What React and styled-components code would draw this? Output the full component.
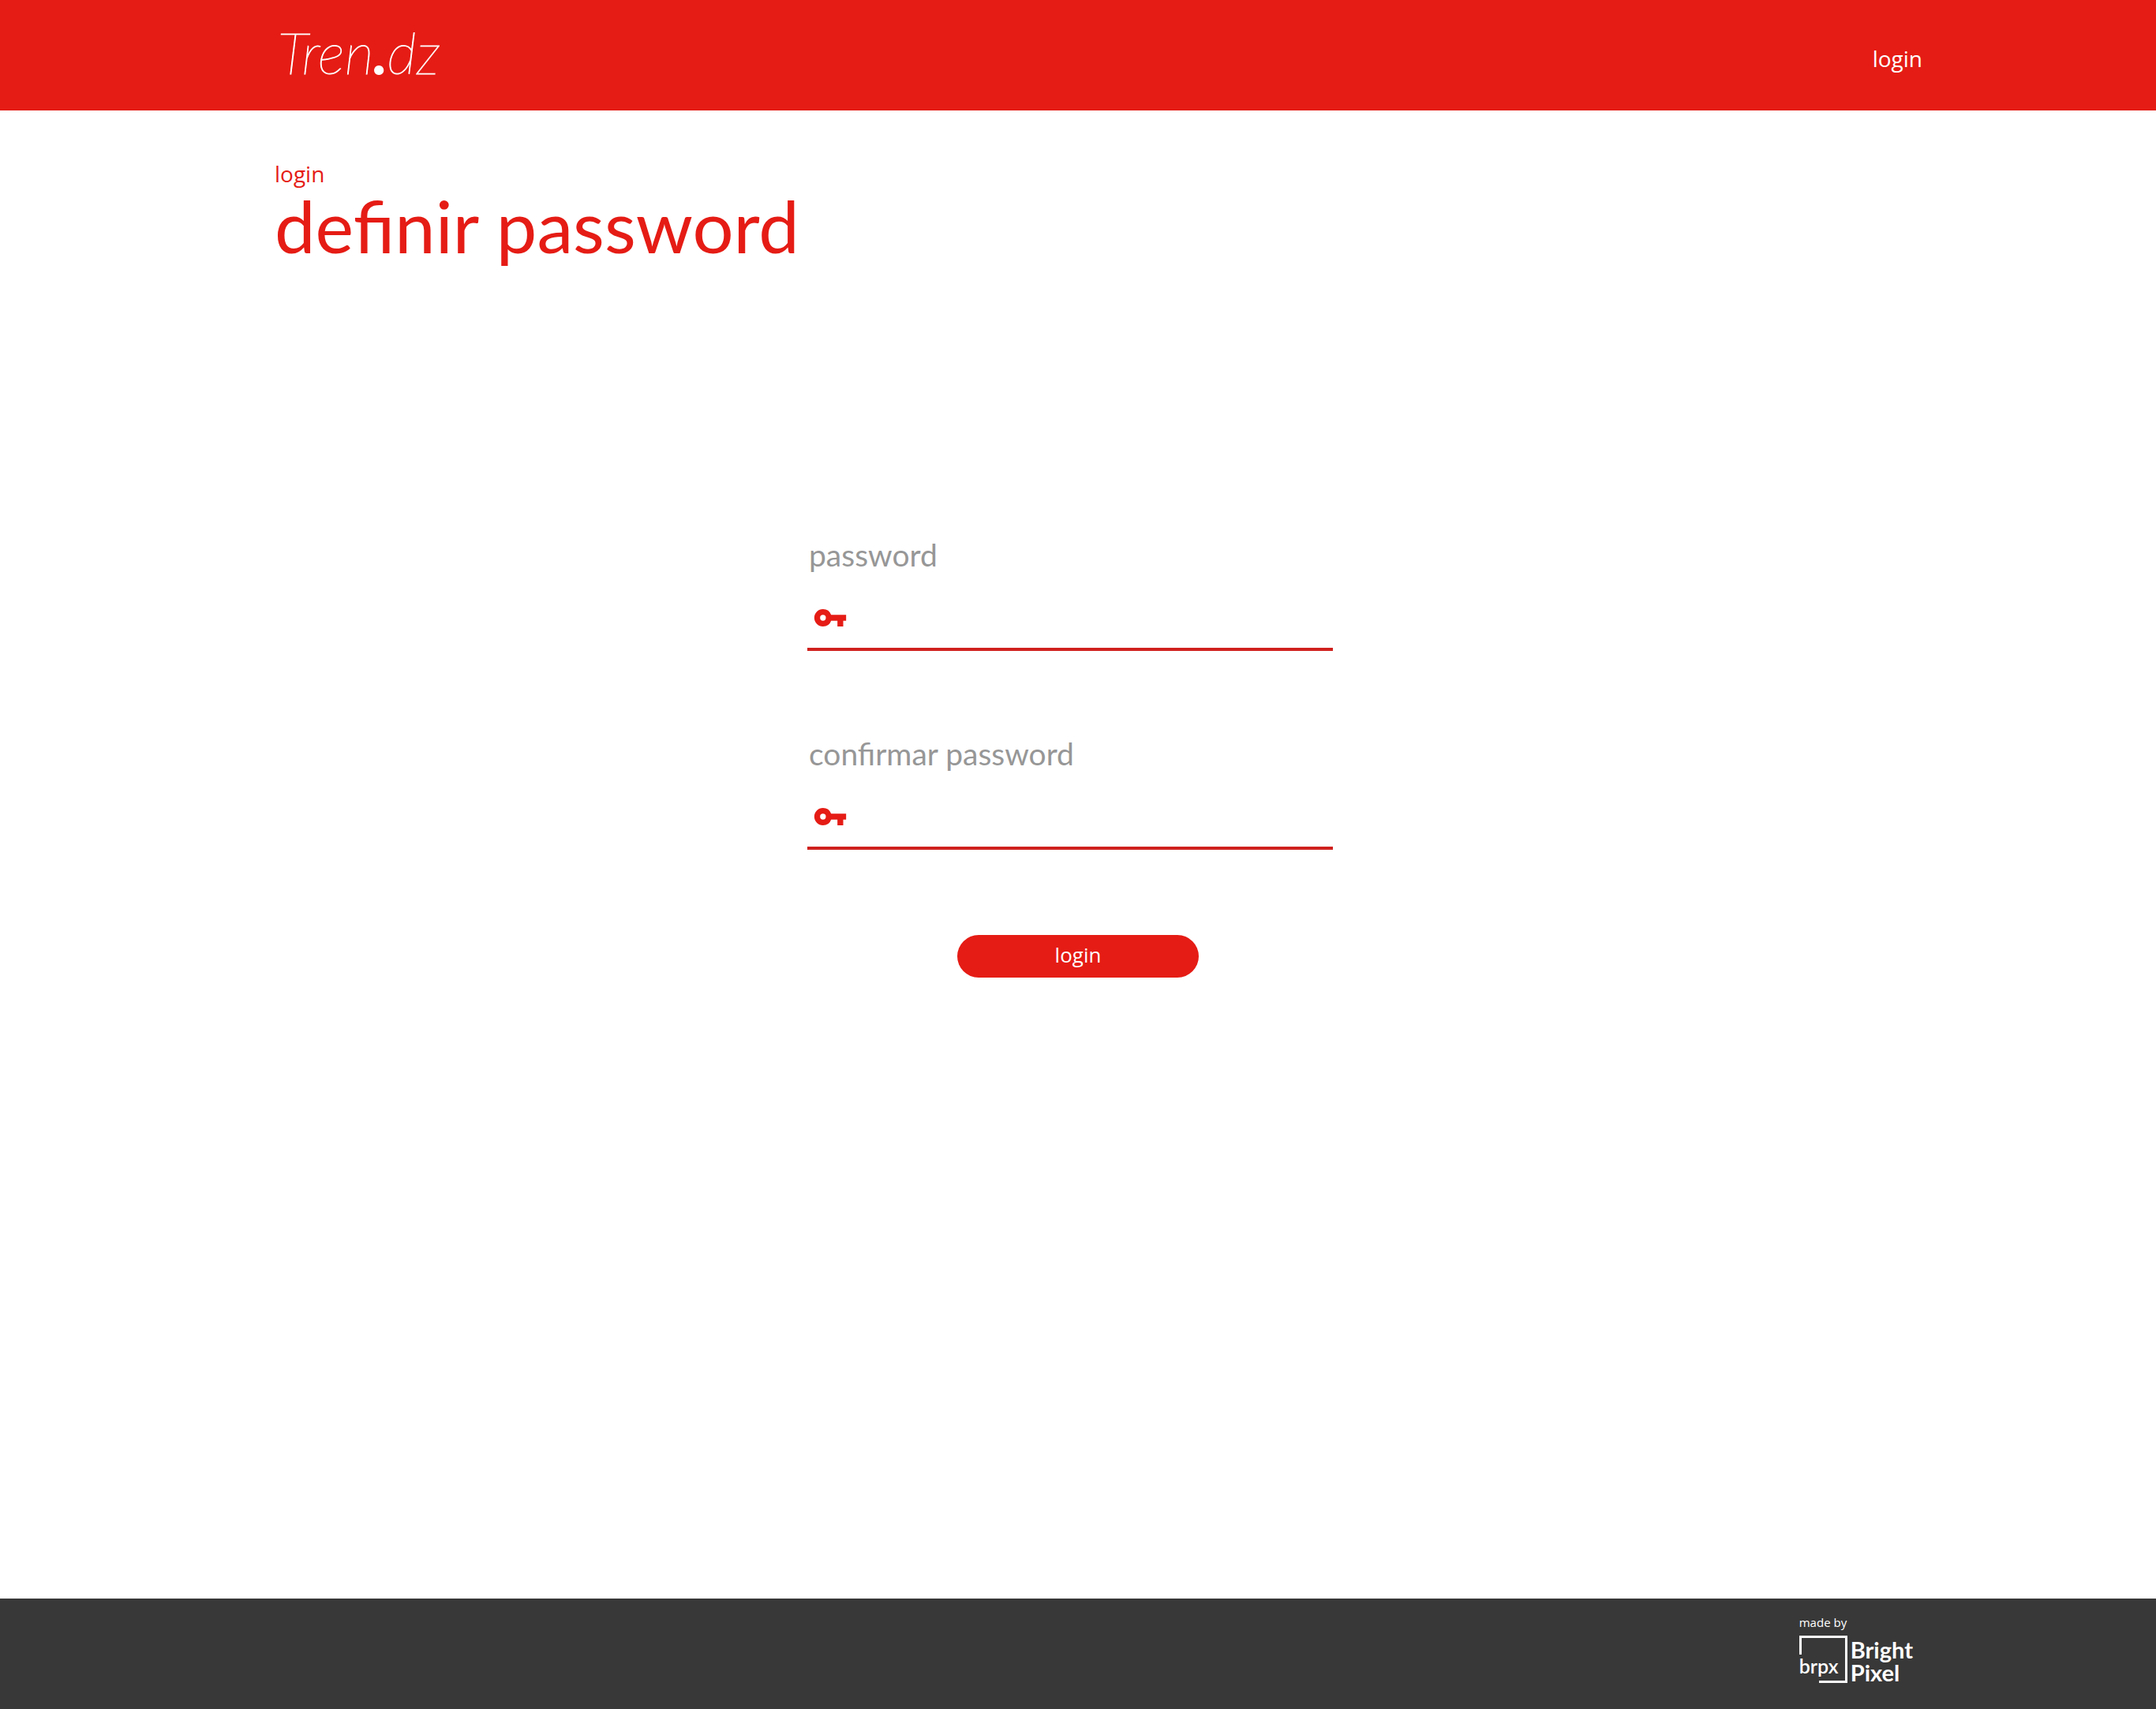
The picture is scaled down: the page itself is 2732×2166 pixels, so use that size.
import React from 'react';
import styled, { createGlobalStyle } from 'styled-components';

const red = '#e51c15';
const darkRed = '#cf211e';
const bodyFont = '"Open Sans", "Noto Sans", sans-serif';
const displayFont = 'Lato, "Open Sans", sans-serif';

const GlobalStyle = createGlobalStyle`
  *, *::before, *::after { box-sizing: border-box; }
  body {
    margin: 0;
    background: #fff;
    font-family: ${bodyFont};
  }
`;

const Page = styled.div`
  display: flex;
  flex-direction: column;
  min-height: 100vh;
`;

const Header = styled.header`
  display: flex;
  align-items: center;
  justify-content: space-between;
  min-height: 140px;
  padding: 0 296px 0 352px;
  background: ${red};
`;

const Logo = styled.a`
  padding-bottom: 8px;
  color: #fff;
  font: italic 100 73px/80px ${displayFont};
  text-decoration: none;
  -webkit-text-stroke: 1px #fff;
`;

const LogoDot = styled.span`
  font-weight: 700;
`;

const Nav = styled.nav`
  padding-top: 8px;
`;

const TextLink = styled.a`
  color: ${(p) => p.$color};
  font-size: 28px;
  line-height: 36px;
  text-decoration: none;
`;

const Main = styled.main`
  display: flex;
  flex-direction: column;
  flex: 1;
  padding: 62px 348px;
`;

const Breadcrumb = styled.nav`
  display: flex;
`;

const Title = styled.h1`
  margin: 0;
  color: ${red};
  font: 400 92px/96px ${displayFont};
`;

const Form = styled.form`
  display: flex;
  flex-direction: column;
  width: 100%;
  max-width: 686px;
  margin: 345px auto 0;
`;

const Fields = styled.div`
  display: flex;
  flex-direction: column;
  gap: 106px;
  padding-right: 20px;
`;

const Field = styled.div`
  display: flex;
  flex-direction: column;
`;

const Label = styled.label`
  padding-left: 2px;
  color: #979797;
  font: 400 39px/48px ${displayFont};
`;

const InputRow = styled.div`
  display: flex;
  align-items: center;
  gap: 16px;
  margin-top: 18px;
  padding-left: 7px;
  border-bottom: 4px solid ${darkRed};
`;

const KeySvg = styled.svg`
  flex: none;
  width: 44px;
  height: 44px;
  fill: ${red};
`;

const Input = styled.input`
  flex: 1;
  min-width: 0;
  height: 76px;
  padding: 0;
  border: 0;
  outline: 0;
  background: transparent;
  color: #383838;
  font: 400 36px/44px ${bodyFont};
`;

const SubmitButton = styled.button`
  align-self: center;
  width: 306px;
  height: 54px;
  margin-top: 108px;
  padding: 0 0 4px;
  border: 0;
  border-radius: 27px;
  background: ${red};
  color: #fff;
  font: 400 26px/36px ${bodyFont};
  cursor: pointer;
`;

const Footer = styled.footer`
  display: flex;
  justify-content: flex-end;
  min-height: 140px;
  padding: 20px 308px 0 348px;
  background: #383838;
  color: #fff;
`;

const Credit = styled.div`
  display: flex;
  flex-direction: column;
  gap: 7px;
  font-size: 15px;
  line-height: 20px;
`;

const BrandLink = styled.a`
  display: flex;
  gap: 4px;
  color: #fff;
  text-decoration: none;
`;

const BrandMark = styled.span`
  display: grid;
  width: 61px;
  height: 60px;
  font: 600 25px/28px ${displayFont};

  > * {
    grid-area: 1 / 1;
  }
`;

const BrandFrame = styled.svg`
  width: 61px;
  height: 60px;
  fill: none;
  stroke: #fff;
  stroke-width: 3;
`;

const BrandInitials = styled.span`
  align-self: end;
  padding-bottom: 8px;
`;

const BrandName = styled.span`
  display: flex;
  flex-direction: column;
  padding-top: 3px;
  font: 700 29px/29px ${displayFont};
`;

function KeyIcon() {
  return (
    <KeySvg viewBox="0 0 24 24" aria-hidden="true">
      <path d="M12.65 10A6 6 0 0 0 7 6a6 6 0 0 0 0 12 6 6 0 0 0 5.65-4H17v4h4v-4h2v-4zM7 14a2 2 0 1 1 0-4 2 2 0 0 1 0 4z" />
    </KeySvg>
  );
}

function PasswordField({ id, label }) {
  return (
    <Field>
      <Label htmlFor={id}>{label}</Label>
      <InputRow>
        <KeyIcon />
        <Input id={id} name={id} type="password" />
      </InputRow>
    </Field>
  );
}

export default function App() {
  return (
    <Page>
      <GlobalStyle />
      <Header>
        <Logo href="#">
          Tren<LogoDot>.</LogoDot>dz
        </Logo>
        <Nav>
          <TextLink href="#login" $color="#fff">login</TextLink>
        </Nav>
      </Header>
      <Main>
        <Breadcrumb>
          <TextLink href="#login" $color={red}>login</TextLink>
        </Breadcrumb>
        <Title>definir password</Title>
        <Form onSubmit={(e) => e.preventDefault()}>
          <Fields>
            <PasswordField id="password" label="password" />
            <PasswordField id="confirm-password" label="confirmar password" />
          </Fields>
          <SubmitButton type="submit">login</SubmitButton>
        </Form>
      </Main>
      <Footer>
        <Credit>
          made by
          <BrandLink href="#bright-pixel">
            <BrandMark>
              <BrandFrame viewBox="0 0 61 60" aria-hidden="true">
                <path d="M1.5 24V1.5H59.5V58.5H25" />
              </BrandFrame>
              <BrandInitials>brpx</BrandInitials>
            </BrandMark>
            <BrandName>
              <span>Bright</span>
              <span>Pixel</span>
            </BrandName>
          </BrandLink>
        </Credit>
      </Footer>
    </Page>
  );
}
